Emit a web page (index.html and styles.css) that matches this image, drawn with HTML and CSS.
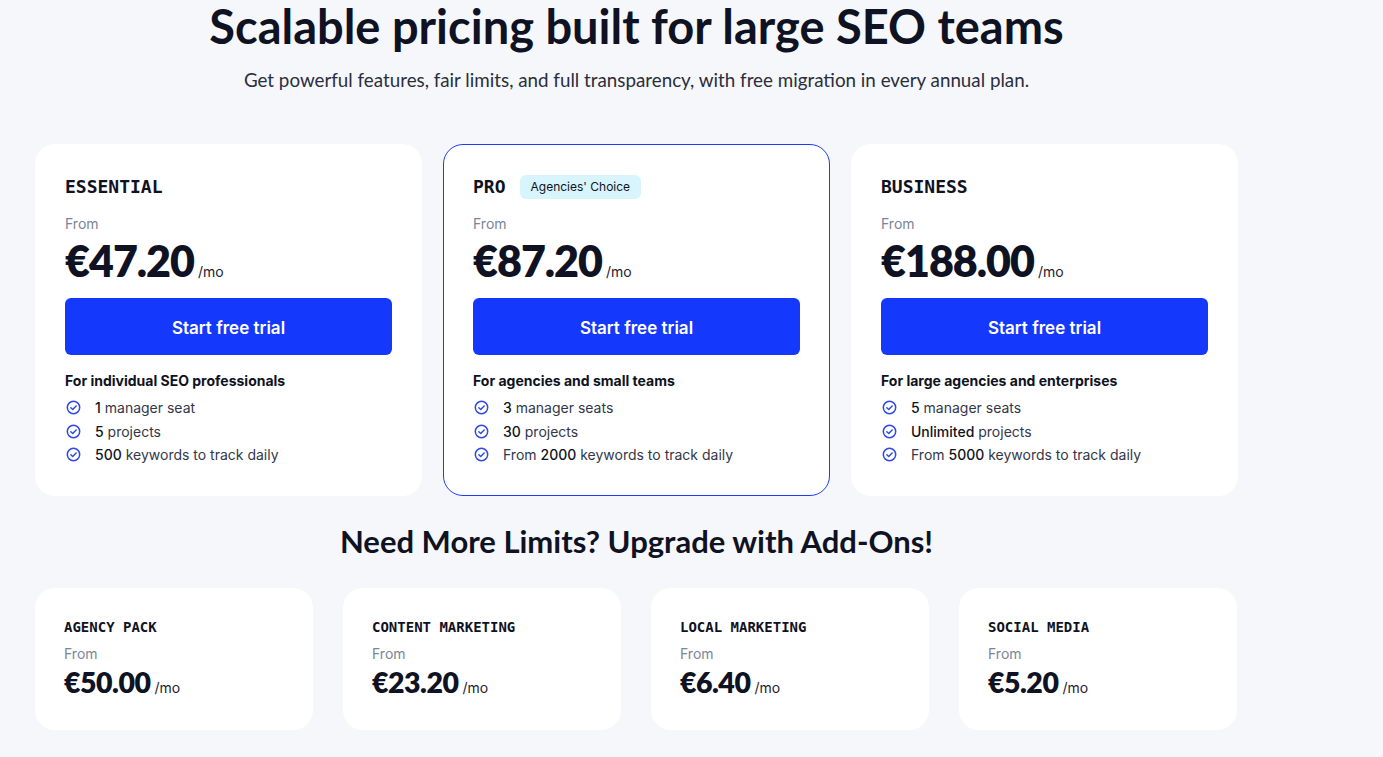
FILE: index.html
```html
<!DOCTYPE html>
<html lang="en">
<head>
<meta charset="utf-8">
<title>Pricing</title>
<link rel="stylesheet" href="styles.css">
</head>
<body>
<main class="page">
  <header class="hero">
    <h1 class="hero-title">Scalable pricing built for large SEO teams</h1>
    <p class="hero-sub">Get powerful features, fair limits, and full transparency, with free migration in every annual plan.</p>
  </header>

  <section class="plans">
    <article class="plan">
      <div class="plan-head"><h2 class="plan-name">ESSENTIAL</h2></div>
      <div class="from">From</div>
      <div class="price"><span class="amount">€47.20</span><span class="per">/mo</span></div>
      <button class="cta">Start free trial</button>
      <h3 class="audience">For individual SEO professionals</h3>
      <ul class="features">
        <li><svg class="check" viewBox="0 0 16 16"><circle cx="8" cy="8" r="6.6"/><path d="M5.2 8.2l2 1.9 3.6-3.6"/></svg><span><b>1</b> manager seat</span></li>
        <li><svg class="check" viewBox="0 0 16 16"><circle cx="8" cy="8" r="6.6"/><path d="M5.2 8.2l2 1.9 3.6-3.6"/></svg><span><b>5</b> projects</span></li>
        <li><svg class="check" viewBox="0 0 16 16"><circle cx="8" cy="8" r="6.6"/><path d="M5.2 8.2l2 1.9 3.6-3.6"/></svg><span><b>500</b> keywords to track daily</span></li>
      </ul>
    </article>

    <article class="plan plan-featured">
      <div class="plan-head"><h2 class="plan-name">PRO</h2><span class="badge">Agencies' Choice</span></div>
      <div class="from">From</div>
      <div class="price"><span class="amount">€87.20</span><span class="per">/mo</span></div>
      <button class="cta">Start free trial</button>
      <h3 class="audience">For agencies and small teams</h3>
      <ul class="features">
        <li><svg class="check" viewBox="0 0 16 16"><circle cx="8" cy="8" r="6.6"/><path d="M5.2 8.2l2 1.9 3.6-3.6"/></svg><span><b>3</b> manager seats</span></li>
        <li><svg class="check" viewBox="0 0 16 16"><circle cx="8" cy="8" r="6.6"/><path d="M5.2 8.2l2 1.9 3.6-3.6"/></svg><span><b>30</b> projects</span></li>
        <li><svg class="check" viewBox="0 0 16 16"><circle cx="8" cy="8" r="6.6"/><path d="M5.2 8.2l2 1.9 3.6-3.6"/></svg><span>From <b>2000</b> keywords to track daily</span></li>
      </ul>
    </article>

    <article class="plan">
      <div class="plan-head"><h2 class="plan-name">BUSINESS</h2></div>
      <div class="from">From</div>
      <div class="price"><span class="amount">€188.00</span><span class="per">/mo</span></div>
      <button class="cta">Start free trial</button>
      <h3 class="audience">For large agencies and enterprises</h3>
      <ul class="features">
        <li><svg class="check" viewBox="0 0 16 16"><circle cx="8" cy="8" r="6.6"/><path d="M5.2 8.2l2 1.9 3.6-3.6"/></svg><span><b>5</b> manager seats</span></li>
        <li><svg class="check" viewBox="0 0 16 16"><circle cx="8" cy="8" r="6.6"/><path d="M5.2 8.2l2 1.9 3.6-3.6"/></svg><span><b>Unlimited</b> projects</span></li>
        <li><svg class="check" viewBox="0 0 16 16"><circle cx="8" cy="8" r="6.6"/><path d="M5.2 8.2l2 1.9 3.6-3.6"/></svg><span>From <b>5000</b> keywords to track daily</span></li>
      </ul>
    </article>
  </section>

  <h2 class="addons-title">Need More Limits? Upgrade with Add-Ons!</h2>

  <section class="addons">
    <article class="addon">
      <h3 class="addon-name">AGENCY PACK</h3>
      <div class="from">From</div>
      <div class="addon-price"><span class="addon-amount">€50.00</span><span class="per">/mo</span></div>
    </article>
    <article class="addon">
      <h3 class="addon-name">CONTENT MARKETING</h3>
      <div class="from">From</div>
      <div class="addon-price"><span class="addon-amount">€23.20</span><span class="per">/mo</span></div>
    </article>
    <article class="addon">
      <h3 class="addon-name">LOCAL MARKETING</h3>
      <div class="from">From</div>
      <div class="addon-price"><span class="addon-amount">€6.40</span><span class="per">/mo</span></div>
    </article>
    <article class="addon">
      <h3 class="addon-name">SOCIAL MEDIA</h3>
      <div class="from">From</div>
      <div class="addon-price"><span class="addon-amount">€5.20</span><span class="per">/mo</span></div>
    </article>
  </section>
</main>
</body>
</html>
```

FILE: styles.css
```css
* { box-sizing: border-box; }
html, body { margin: 0; padding: 0; }
body {
  background: #f6f7fb;
  color: #0f1222;
  font-family: "Lato", "Noto Sans", sans-serif;
}
.page {
  width: 1203px;
  margin-left: 35px;
  padding-top: 2px;
}
.hero { text-align: center; }
.hero-title {
  margin: 0;
  font-size: 47px;
  line-height: 48px;
  font-weight: 700;
}
.hero-sub {
  margin: 18px 0 0;
  font-size: 18.8px;
  line-height: 24px;
  color: #2a2e3d;
}
.plans {
  display: grid;
  grid-template-columns: repeat(3, 387px);
  gap: 21px;
  margin-top: 52px;
}
.plan {
  background: #fff;
  border-radius: 20px;
  border: 1px solid transparent;
  padding: 30px 29px 28px;
}
.plan-featured { border-color: #1e3df2; }
.plan-head {
  display: flex;
  align-items: center;
  gap: 14px;
  height: 24px;
}
.plan-name {
  margin: 0;
  font-family: "DejaVu Sans Mono", "Liberation Mono", monospace;
  font-weight: 700;
  font-size: 18px;
  line-height: 24px;
}
.badge {
  background: #d8f5fd;
  border-radius: 6px;
  font-family: "Inter", sans-serif;
  font-size: 12px;
  line-height: 24px;
  padding: 0 11px;
  color: #0f1222;
}
.from {
  margin-top: 16px;
  font-family: "Inter", sans-serif;
  font-size: 14px;
  line-height: 18px;
  color: #7c8598;
}
.price {
  display: flex;
  align-items: baseline;
  gap: 4px;
  margin-top: 6px;
  line-height: 44px;
}
.amount {
  font-size: 43px;
  font-weight: 800;
  letter-spacing: -1px;
}
.per {
  font-family: "Inter", sans-serif;
  font-size: 14px;
  color: #1d2130;
}
.cta {
  display: block;
  width: 100%;
  height: 57px;
  margin-top: 4px;
  border: 0;
  border-radius: 6px;
  background: #1438fc;
  color: #fff;
  font-family: "Inter", sans-serif;
  font-size: 17px;
  font-weight: 600;
  padding-top: 3px;
  cursor: pointer;
}
.audience {
  margin: 17px 0 0;
  font-family: "Inter", sans-serif;
  font-size: 14px;
  line-height: 18px;
  font-weight: 700;
}
.features {
  list-style: none;
  margin: 6px 0 0;
  padding: 0;
}
.features li {
  display: flex;
  align-items: center;
  gap: 14px;
  height: 23.5px;
  font-family: "Inter", sans-serif;
  font-size: 14px;
  color: #33374a;
  padding-left: 1px;
}
.features b { font-weight: 500; color: #0f1222; }
.check {
  width: 15px;
  height: 15px;
  flex: none;
  fill: none;
  stroke: #2f49e6;
  stroke-width: 1.6;
  stroke-linecap: round;
  stroke-linejoin: round;
}
.addons-title {
  margin: 27px 0 0;
  text-align: center;
  font-size: 31px;
  line-height: 36px;
  font-weight: 700;
}
.addons {
  display: grid;
  grid-template-columns: repeat(4, 278px);
  gap: 30px;
  margin-top: 29px;
}
.addon {
  background: #fff;
  border-radius: 20px;
  height: 142px;
  padding: 29px 29px;
}
.addon-name {
  margin: 0;
  font-family: "DejaVu Sans Mono", "Liberation Mono", monospace;
  font-weight: 700;
  font-size: 14px;
  line-height: 20px;
}
.addon .from { margin-top: 8px; }
.addon-price {
  display: flex;
  align-items: baseline;
  gap: 4px;
  margin-top: 4px;
  line-height: 30px;
}
.addon-amount {
  font-size: 28.5px;
  font-weight: 800;
  letter-spacing: -0.5px;
}
```
